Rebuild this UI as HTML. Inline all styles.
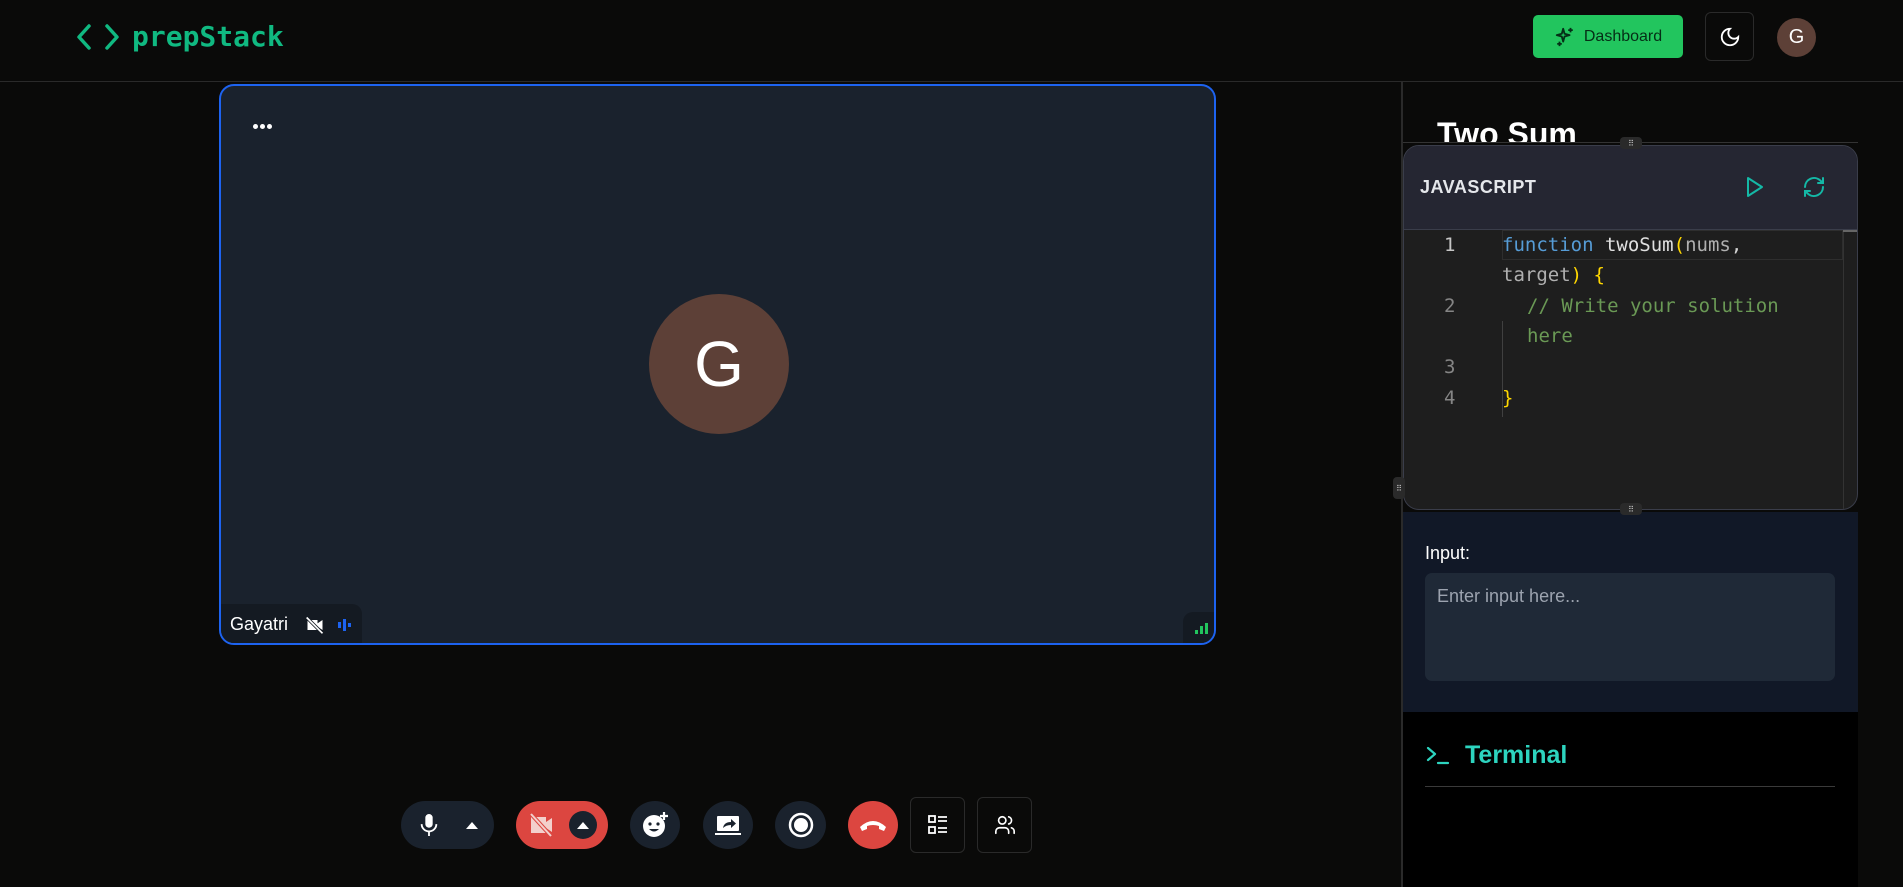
<!DOCTYPE html>
<html><head><meta charset="utf-8"><style>
*{box-sizing:border-box;margin:0;padding:0}
body{width:1903px;height:887px;background:#0a0a09;font-family:"Liberation Sans",sans-serif;position:relative;overflow:hidden;color:#fff}
.a{position:absolute}
.mono{font-family:"DejaVu Sans Mono","Liberation Mono",monospace}
.cb{display:flex;align-items:center;justify-content:center}
</style></head><body>
<div class="a" style="left:0;top:0;width:1903px;height:82px;border-bottom:1px solid #2a2a2a"></div>
<svg class="a" style="left:76px;top:22px" width="44" height="30" viewBox="0 0 44 30" fill="none" stroke="#10b981" stroke-width="3.5" stroke-linecap="round" stroke-linejoin="round"><path d="M13 4 3 15l10 11M31 4l10 11-10 11"/></svg>
<div class="a mono" style="left:132px;top:20px;font-size:28px;color:#10b981;font-weight:bold">prepStack</div>
<div class="a cb" style="left:1533px;top:15px;width:150px;height:43px;background:#22c55e;border-radius:5px;color:#052e16;font-size:16px;gap:8px">
<svg width="22" height="22" viewBox="0 0 24 24" fill="none" stroke="#052e16" stroke-width="2" stroke-linejoin="round"><path d="M10 3l1.5 5.5L17 10l-5.5 1.5L10 17l-1.5-5.5L3 10l5.5-1.5z"/><path d="M18 2v5M15.5 4.5h5M6 17v5M3.5 19.5h5"/></svg>Dashboard</div>
<div class="a cb" style="left:1705px;top:12px;width:49px;height:49px;border:1px solid #2a2a2a;border-radius:6px">
<svg width="22" height="22" viewBox="0 0 24 24" fill="none" stroke="#fff" stroke-width="2"><path d="M12 3a6 6 0 0 0 9 9 9 9 0 1 1-9-9z"/></svg></div>
<div class="a cb" style="left:1777px;top:18px;width:39px;height:39px;border-radius:50%;background:#5d4037;font-size:20px">G</div>
<div class="a" style="left:1401px;top:82px;width:2px;height:805px;background:#2a2a2a"></div>
<div class="a" style="left:219px;top:84px;width:997px;height:561px;background:#1a222d;border:2px solid #1d63f0;border-radius:15px;overflow:hidden">
<div class="a" style="left:32px;top:38px;width:5px;height:5px;border-radius:50%;background:#fff;box-shadow:7px 0 #fff,14px 0 #fff"></div>
<div class="a cb" style="left:428px;top:208px;width:140px;height:140px;border-radius:50%;background:#5d4037;font-size:64px">G</div>
<div class="a" style="left:0;top:518px;width:141px;height:41px;background:#141a22;border-top-right-radius:10px;font-size:18px;padding:10px 9px">Gayatri
<svg class="a" style="left:84px;top:11px" width="20" height="20" viewBox="0 0 24 24" fill="#fff"><path d="M3 6h12v12H3z M15 10l6-4v12l-6-4z"/><path d="M2 3l19 19" stroke="#141a22" stroke-width="4"/><path d="M2 3l19 19" stroke="#fff" stroke-width="2"/></svg>
<div class="a" style="left:117px;top:18px;width:3px;height:6px;background:#1d63f0"></div><div class="a" style="left:122px;top:15px;width:3px;height:12px;background:#1d63f0"></div><div class="a" style="left:127px;top:19px;width:3px;height:4px;background:#1d63f0"></div></div>
<div class="a" style="left:962px;top:526px;width:33px;height:33px;background:#141a22;border-top-left-radius:10px">
<div class="a" style="left:12px;top:18px;width:3px;height:4px;background:#22c55e"></div><div class="a" style="left:17px;top:14px;width:3px;height:8px;background:#22c55e"></div><div class="a" style="left:22px;top:11px;width:3px;height:11px;background:#22c55e"></div></div>
</div>
<div class="a cb" style="left:401px;top:801px;width:93px;height:48px;border-radius:24px;background:#1a222d;gap:26px">
<svg width="22" height="26" viewBox="0 0 24 28" fill="#fff"><rect x="8" y="2" width="8" height="15" rx="4"/><path d="M4 13a8 8 0 0 0 16 0" stroke="#fff" stroke-width="2" fill="none"/><path d="M11 21h2v5h-2z"/></svg>
<svg width="12" height="8"><path d="M0 8 6 1 12 8z" fill="#fff"/></svg></div>
<div class="a" style="left:516px;top:801px;width:92px;height:48px;border-radius:24px;background:#dc4640">
<svg class="a" style="left:13px;top:12px" width="26" height="24" viewBox="0 0 26 24" fill="#f3d0cc"><path d="M2 4h15v16H2z M17 9l6-4v14l-6-4z"/><path d="M2 1l20 22" stroke="#dc4640" stroke-width="4"/><path d="M2 1l20 22" stroke="#f3d0cc" stroke-width="2"/></svg>
<div class="a cb" style="left:53px;top:10px;width:28px;height:28px;border-radius:50%;background:#1a222d"><svg width="12" height="8"><path d="M0 8 6 1 12 8z" fill="#fff"/></svg></div></div>
<div class="a cb" style="left:630px;top:801px;width:50px;height:48px;border-radius:50%;background:#1a222d"><svg width="28" height="28" viewBox="0 0 28 28"><circle cx="13" cy="15" r="11" fill="#fff"/><circle cx="9" cy="13" r="1.6" fill="#1a222d"/><circle cx="17" cy="13" r="1.6" fill="#1a222d"/><path d="M8 18q5 5 10 0z" fill="#1a222d"/><path d="M23 1v8M19 5h8" stroke="#fff" stroke-width="2.2"/></svg></div>
<div class="a cb" style="left:703px;top:801px;width:50px;height:48px;border-radius:50%;background:#1a222d"><svg width="28" height="24" viewBox="0 0 28 24"><rect x="3" y="3" width="22" height="15" rx="1" fill="#fff"/><rect x="1" y="20" width="26" height="2" fill="#fff"/><path d="M9 15q1-6 8-6V6l5 4.5-5 4.5v-3q-5 0-8 3z" fill="#1a222d"/></svg></div>
<div class="a cb" style="left:775px;top:801px;width:51px;height:48px;border-radius:50%;background:#1a222d"><svg width="26" height="26"><circle cx="13" cy="13" r="11" fill="none" stroke="#fff" stroke-width="2.5"/><circle cx="13" cy="13" r="7" fill="#fff"/></svg></div>
<div class="a cb" style="left:848px;top:801px;width:50px;height:48px;border-radius:50%;background:#dc4640"><svg width="28" height="14" viewBox="0 0 28 14"><path d="M1 9q13-12 26 0l-2 4-5-2v-3q-6-2-12 0v3l-5 2z" fill="#fff"/></svg></div>
<div class="a cb" style="left:910px;top:797px;width:55px;height:56px;border:1px solid #2a2a2a;border-radius:6px"><svg width="22" height="22" viewBox="0 0 22 22" fill="none" stroke="#fff" stroke-width="1.8"><rect x="2" y="2" width="6" height="6"/><rect x="2" y="13" width="6" height="6"/><path d="M11 3h9M11 7h9M11 14h9M11 18h9"/></svg></div>
<div class="a cb" style="left:977px;top:797px;width:55px;height:56px;border:1px solid #2a2a2a;border-radius:6px"><svg width="22" height="22" viewBox="0 0 24 24" fill="none" stroke="#fff" stroke-width="1.8" stroke-linecap="round"><circle cx="9" cy="7" r="4"/><path d="M2 21v-2a4 4 0 0 1 4-4h6a4 4 0 0 1 4 4v2M16 3.1a4 4 0 0 1 0 7.8M22 21v-2a4 4 0 0 0-3-3.9"/></svg></div>
<div class="a" style="left:1403px;top:82px;width:455px;height:60px;overflow:hidden"><div class="a" style="left:34px;top:34px;font-size:32px;font-weight:bold">Two Sum</div></div>
<div class="a" style="left:1403px;top:142px;width:455px;height:1px;background:#333"></div>
<div class="a" style="left:1403px;top:145px;width:455px;height:365px;background:#1e1e1e;border:1px solid #3a3d4a;border-radius:16px;overflow:hidden">
<div class="a" style="left:0;top:0;width:455px;height:84px;background:#252632;border-bottom:1px solid #3a3d4a"></div>
<div class="a" style="left:16px;top:31px;font-size:18px;font-weight:bold;color:#e5e7eb;letter-spacing:0.5px">JAVASCRIPT</div>
<svg class="a" style="left:338px;top:29px" width="24" height="24" viewBox="0 0 24 24" fill="none" stroke="#14b8a6" stroke-width="2" stroke-linejoin="round"><path d="M6 3l14 9-14 9z"/></svg>
<svg class="a" style="left:398px;top:29px" width="24" height="24" viewBox="0 0 24 24" fill="none" stroke="#14b8a6" stroke-width="2" stroke-linecap="round"><path d="M3 12a9 9 0 0 1 15-6.7L21 8M21 3v5h-5M21 12a9 9 0 0 1-15 6.7L3 16M3 21v-5h5"/></svg>
<div class="a" style="left:439px;top:84px;width:1px;height:281px;background:#333"></div>
<div class="a" style="left:439px;top:84px;width:16px;height:2px;background:#666"></div>
<div class="a" style="left:98px;top:84px;width:341px;height:30px;border:1px solid #2e2e2e"></div>
<div class="a" style="left:98px;top:175px;width:1px;height:96px;background:#404040"></div>
<div class="a mono" style="left:0;top:84px;width:455px;font-size:19px;line-height:30.5px">
<div class="a" style="left:40px;top:0;color:#c6c6c6">1</div>
<div class="a" style="left:40px;top:61px;color:#858585">2</div>
<div class="a" style="left:40px;top:122px;color:#858585">3</div>
<div class="a" style="left:40px;top:153px;color:#858585">4</div>
<div class="a" style="left:98px;top:0;white-space:pre"><span style="color:#569cd6">function</span> <span style="color:#e0e0e0">twoSum</span><span style="color:#ffd700">(</span><span style="color:#b0b0b0">nums</span><span style="color:#d4d4d4">,</span></div>
<div class="a" style="left:98px;top:30px;white-space:pre"><span style="color:#b0b0b0">target</span><span style="color:#ffd700">) {</span></div>
<div class="a" style="left:123px;top:61px;white-space:pre;color:#6a9955">// Write your solution</div>
<div class="a" style="left:123px;top:91px;white-space:pre;color:#6a9955">here</div>
<div class="a" style="left:98px;top:153px;color:#ffd700">}</div>
</div></div>
<div class="a" style="left:1403px;top:512px;width:455px;height:200px;background:#111827">
<div class="a" style="left:22px;top:31px;font-size:18px">Input:</div>
<div class="a" style="left:22px;top:61px;width:410px;height:108px;background:#1f2937;border-radius:7px;padding:13px 12px;font-size:18px;color:#9ca3af">Enter input here...</div></div>
<div class="a" style="left:1403px;top:712px;width:455px;height:175px;background:#000">
<svg class="a" style="left:22px;top:32px" width="26" height="22" viewBox="0 0 26 22" fill="none" stroke="#2dd4bf" stroke-width="2.2" stroke-linecap="round" stroke-linejoin="round"><path d="M3 4l7 6-7 6M13 19h10"/></svg>
<div class="a" style="left:62px;top:29px;font-size:25px;font-weight:bold;color:#2dd4bf">Terminal</div>
<div class="a" style="left:22px;top:74px;width:410px;height:1px;background:#3a3a3a"></div></div>
<div class="a cb" style="left:1620px;top:137px;width:22px;height:12px;background:#2a2a2a;border-radius:4px;font-size:8px;color:#ccc">⠿</div>
<div class="a cb" style="left:1620px;top:503px;width:22px;height:12px;background:#2a2a2a;border-radius:4px;font-size:8px;color:#ccc">⠿</div>
<div class="a cb" style="left:1393px;top:477px;width:12px;height:22px;background:#2a2a2a;border-radius:4px;font-size:8px;color:#ccc">⠿</div>
</body></html>
